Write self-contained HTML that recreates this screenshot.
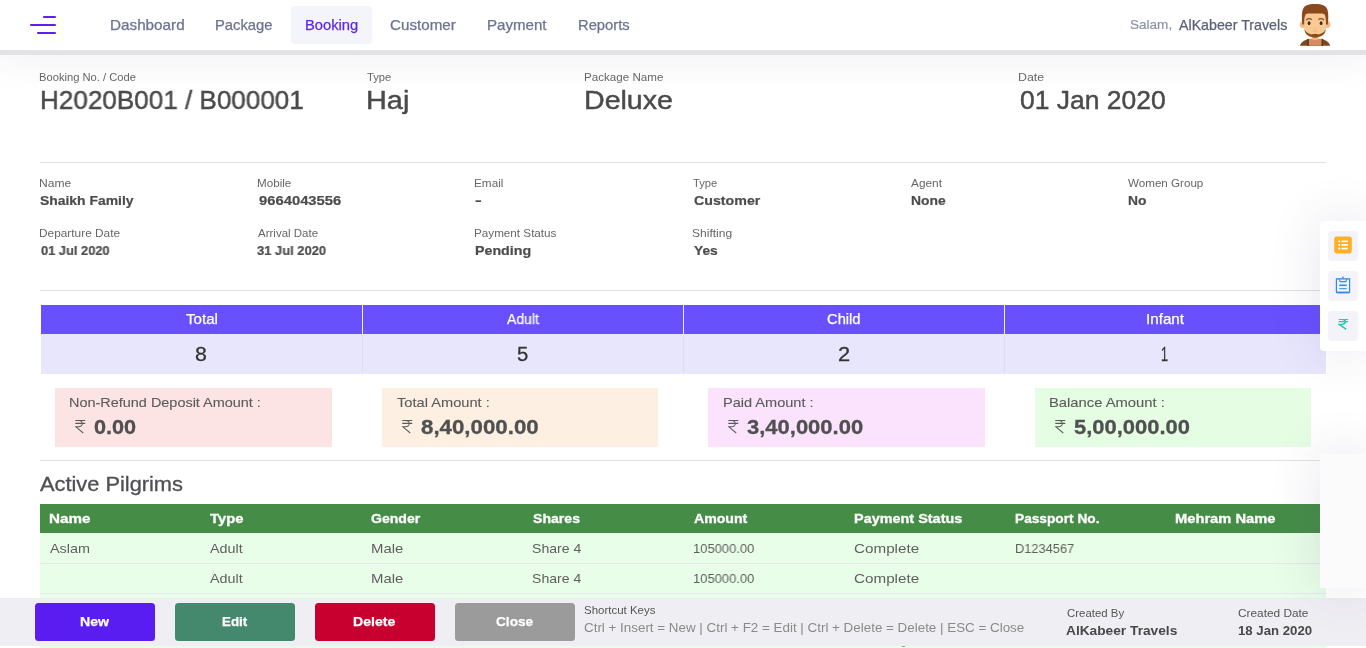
<!DOCTYPE html>
<html lang="en">
<head>
<meta charset="utf-8">
<title>Booking</title>
<style>
*{box-sizing:border-box;margin:0;padding:0}
html,body{width:1366px;height:648px;overflow:hidden;background:#fff}
body{position:relative;font-family:"Liberation Sans",sans-serif}
.a{position:absolute}
.t{position:absolute;white-space:nowrap;line-height:1;transform-origin:0 50%;font-weight:400;will-change:transform}
.hl{position:absolute;height:1px;background:#e1e1e1}
</style>
</head>
<body>
<!-- header -->
<div class="a" style="left:0;top:0;width:1366px;height:55px;background:#fff;box-shadow:0 0 40px 0 rgba(82,63,105,.1)"></div>
<div class="a" style="left:0;top:50px;width:1366px;height:5px;background:#e3e3e5"></div>
<!-- hamburger -->
<div class="a" style="left:43px;top:16px;width:13px;height:2px;background:#5d1ef0;border-radius:1px"></div>
<div class="a" style="left:30px;top:24px;width:26px;height:2px;background:#5d1ef0;border-radius:1px"></div>
<div class="a" style="left:37px;top:32px;width:19px;height:2px;background:#5d1ef0;border-radius:1px"></div>
<!-- active nav -->
<div class="a" style="left:291px;top:6px;width:81px;height:38px;border-radius:4px;background:#f4f5fb"></div>
<!-- avatar -->
<svg class="a" style="left:1299px;top:3px" width="32" height="44" viewBox="0 0 32 44">
<path d="M0.8 42.8 C2 38.6 6.5 36.2 11 35.9 L21.4 35.9 C26 36.2 30 38.6 31.2 42.8 Z" fill="#7b4a1f"/>
<rect x="8.4" y="35.9" width="15.6" height="6.9" fill="#5e3814"/>
<rect x="9.9" y="35.9" width="12.6" height="6.9" fill="#d68c62"/>
<rect x="12.8" y="31" width="6.6" height="6" rx="1.5" fill="#f2b27c"/>
<ellipse cx="3.6" cy="21.6" rx="2.8" ry="3.4" fill="#f5ba86"/>
<ellipse cx="28.6" cy="21.6" rx="2.8" ry="3.4" fill="#f5ba86"/>
<path d="M5 8 L27.2 8 L27.2 24 C27.2 30.5 22.5 34.2 16.1 34.2 C9.7 34.2 5 30.5 5 24 Z" fill="#f9ca95"/>
<path d="M5.6 26.5 C7.5 30.2 11.5 31.8 16.1 31.8 C20.7 31.8 24.7 30.2 26.6 26.5 C26.6 31.5 21.8 34.4 16.1 34.4 C10.4 34.4 5.6 31.5 5.6 26.5 Z" fill="#8a4a1d"/>
<ellipse cx="16.1" cy="32.6" rx="3.4" ry="1.9" fill="#8a4a1d"/>
<path d="M3.3 21.5 C2.7 15 2.6 9.5 3.9 6.2 C5.4 2.4 9 0.9 16.1 0.9 C23.2 0.9 26.8 2.4 28.3 6.2 C29.6 9.5 29.5 15 28.9 21.5 L27 21.5 C27 17 26.9 14 25.6 11.6 C24.9 10.6 23.6 10.4 22 10.4 L10.2 10.4 C8.6 10.4 7.3 10.6 6.6 11.6 C5.3 14 5.2 17 5.2 21.5 Z" fill="#8a4a1d"/>
<path d="M7.6 16.8 C8.6 15.4 11 15.2 12.4 16.2" stroke="#8a4a1d" stroke-width="1.3" fill="none" stroke-linecap="round"/>
<path d="M19.8 16.2 C21.2 15.2 23.6 15.4 24.6 16.8" stroke="#8a4a1d" stroke-width="1.3" fill="none" stroke-linecap="round"/>
<ellipse cx="10.1" cy="20.2" rx="1.4" ry="1.9" fill="#3d2a1e"/>
<ellipse cx="22.1" cy="20.2" rx="1.4" ry="1.9" fill="#3d2a1e"/>
<rect x="14.6" y="24.6" width="3" height="1.2" rx=".6" fill="#f5b985"/>
<rect x="13.2" y="27.6" width="5.8" height="1" rx=".5" fill="#f2b27c"/>
</svg>
<!-- separators -->
<div class="hl" style="left:40px;top:162px;width:1286px"></div>
<div class="hl" style="left:40px;top:290px;width:1286px"></div>
<div class="hl" style="left:40px;top:460px;width:1286px"></div>
<!-- counts table -->
<div class="a" style="left:40.7px;top:305px;width:1285px;height:28.8px;background:#6850ff"></div>
<div class="a" style="left:40.7px;top:333.8px;width:1285px;height:40.6px;background:#e8e6fd"></div>
<div class="a" style="left:362.3px;top:304.8px;width:1px;height:29px;background:rgba(255,255,255,.9)"></div><div class="a" style="left:362.3px;top:333.8px;width:1px;height:40.7px;background:#dedeea"></div>
<div class="a" style="left:683.3px;top:304.8px;width:1px;height:29px;background:rgba(255,255,255,.9)"></div><div class="a" style="left:683.3px;top:333.8px;width:1px;height:40.7px;background:#dedeea"></div>
<div class="a" style="left:1004.3px;top:304.8px;width:1px;height:29px;background:rgba(255,255,255,.9)"></div><div class="a" style="left:1004.3px;top:333.8px;width:1px;height:40.7px;background:#dedeea"></div>
<!-- amount boxes -->
<div class="a" style="left:55px;top:388px;width:276.5px;height:58.5px;background:#fce4e4"></div>
<div class="a" style="left:382px;top:388px;width:275.5px;height:58.5px;background:#fdf0e2"></div>
<div class="a" style="left:708px;top:388px;width:276.5px;height:58.5px;background:#fbe3fd"></div>
<div class="a" style="left:1035px;top:388px;width:275.5px;height:58.5px;background:#e5fde3"></div>
<svg class="a" style="left:74.5px;top:419.6px" width="11.4" height="14" viewBox="0 0 12 14" preserveAspectRatio="none"><path d="M0.3 0.55 H10.8 M0.3 3.35 H10.8 M0.3 0.55 H3.9 C6.3 0.55 7.7 1.8 7.7 3.55 C7.7 5.4 6.1 6.65 3.7 6.65 H0.6 L8.7 13" fill="none" stroke="#5a5a5a" stroke-width="1.05"/></svg>
<svg class="a" style="left:401.5px;top:419.6px" width="11.4" height="14" viewBox="0 0 12 14" preserveAspectRatio="none"><path d="M0.3 0.55 H10.8 M0.3 3.35 H10.8 M0.3 0.55 H3.9 C6.3 0.55 7.7 1.8 7.7 3.55 C7.7 5.4 6.1 6.65 3.7 6.65 H0.6 L8.7 13" fill="none" stroke="#5a5a5a" stroke-width="1.05"/></svg>
<svg class="a" style="left:728px;top:419.6px" width="11.4" height="14" viewBox="0 0 12 14" preserveAspectRatio="none"><path d="M0.3 0.55 H10.8 M0.3 3.35 H10.8 M0.3 0.55 H3.9 C6.3 0.55 7.7 1.8 7.7 3.55 C7.7 5.4 6.1 6.65 3.7 6.65 H0.6 L8.7 13" fill="none" stroke="#5a5a5a" stroke-width="1.05"/></svg>
<svg class="a" style="left:1054.5px;top:419.6px" width="11.4" height="14" viewBox="0 0 12 14" preserveAspectRatio="none"><path d="M0.3 0.55 H10.8 M0.3 3.35 H10.8 M0.3 0.55 H3.9 C6.3 0.55 7.7 1.8 7.7 3.55 C7.7 5.4 6.1 6.65 3.7 6.65 H0.6 L8.7 13" fill="none" stroke="#5a5a5a" stroke-width="1.05"/></svg>

<!-- pilgrims table -->
<div class="a" style="left:40px;top:504px;width:1286px;height:28.9px;background:#458d47"></div>
<div class="a" style="left:40px;top:532.5px;width:1286px;height:116px;background:#e8fee8"></div>
<div class="hl" style="left:40px;top:563px;width:1286px;background:#e6e8ee"></div>
<div class="hl" style="left:40px;top:593px;width:1286px;background:#e6e8ee"></div>
<span class="t" style="left:109.52px;top:18.38px;font-size:14.20px;color:#6c7293;transform:scaleX(1.0753);-webkit-text-stroke:.25px currentColor;">Dashboard</span>
<span class="t" style="left:215.16px;top:18.38px;font-size:14.20px;color:#6c7293;transform:scaleX(1.0416);-webkit-text-stroke:.25px currentColor;">Package</span>
<span class="t" style="left:304.76px;top:18.38px;font-size:14.20px;color:#5d28e8;transform:scaleX(1.0390);-webkit-text-stroke:.25px currentColor;">Booking</span>
<span class="t" style="left:389.88px;top:18.38px;font-size:14.20px;color:#6c7293;transform:scaleX(1.0708);-webkit-text-stroke:.25px currentColor;">Customer</span>
<span class="t" style="left:486.74px;top:18.38px;font-size:14.20px;color:#6c7293;transform:scaleX(1.0631);-webkit-text-stroke:.25px currentColor;">Payment</span>
<span class="t" style="left:578.17px;top:18.38px;font-size:14.20px;color:#6c7293;transform:scaleX(1.0398);-webkit-text-stroke:.25px currentColor;">Reports</span>
<span class="t" style="left:1129.54px;top:19.12px;font-size:12.38px;color:#8d93ab;transform:scaleX(1.0942);-webkit-text-stroke:.2px currentColor;">Salam,</span>
<span class="t" style="left:1178.60px;top:18.38px;font-size:14.20px;color:#5c6079;transform:scaleX(1.0019);-webkit-text-stroke:.25px currentColor;">AlKabeer Travels</span>
<span class="t" style="left:39.11px;top:71.85px;font-size:11.16px;color:#666;transform:scaleX(1.0029);">Booking No. / Code</span>
<span class="t" style="left:40.02px;top:86.57px;font-size:26.38px;color:#4a4a4a;transform:scaleX(0.9883);-webkit-text-stroke:.45px currentColor;">H2020B001 / B000001</span>
<span class="t" style="left:366.80px;top:71.85px;font-size:11.16px;color:#666;transform:scaleX(1.0040);">Type</span>
<span class="t" style="left:366.23px;top:86.57px;font-size:26.38px;color:#4a4a4a;transform:scaleX(1.0958);-webkit-text-stroke:.45px currentColor;">Haj</span>
<span class="t" style="left:583.86px;top:71.85px;font-size:11.16px;color:#666;transform:scaleX(1.0403);">Package Name</span>
<span class="t" style="left:583.85px;top:86.57px;font-size:26.38px;color:#4a4a4a;transform:scaleX(1.0832);-webkit-text-stroke:.45px currentColor;">Deluxe</span>
<span class="t" style="left:1018.00px;top:71.85px;font-size:11.16px;color:#666;transform:scaleX(1.1093);">Date</span>
<span class="t" style="left:1020.00px;top:86.57px;font-size:26.38px;color:#4a4a4a;transform:scaleX(1.0033);-webkit-text-stroke:.45px currentColor;">01 Jan 2020</span>
<span class="t" style="left:39.01px;top:177.55px;font-size:11.16px;color:#666;transform:scaleX(1.0831);">Name</span>
<span class="t" style="left:39.99px;top:193.74px;font-size:13.19px;color:#4c4c4c;transform:scaleX(1.0546);font-weight:700;-webkit-text-stroke:.2px currentColor;">Shaikh Family</span>
<span class="t" style="left:39.04px;top:227.75px;font-size:11.16px;color:#666;transform:scaleX(1.0633);">Departure Date</span>
<span class="t" style="left:40.60px;top:243.54px;font-size:13.19px;color:#4c4c4c;transform:scaleX(0.9745);font-weight:700;-webkit-text-stroke:.2px currentColor;">01 Jul 2020</span>
<span class="t" style="left:257.04px;top:177.55px;font-size:11.16px;color:#666;transform:scaleX(1.0438);">Mobile</span>
<span class="t" style="left:258.60px;top:193.74px;font-size:13.19px;color:#4c4c4c;transform:scaleX(1.1216);font-weight:700;-webkit-text-stroke:.2px currentColor;">9664043556</span>
<span class="t" style="left:258.00px;top:227.75px;font-size:11.16px;color:#666;transform:scaleX(1.0317);">Arrival Date</span>
<span class="t" style="left:257.08px;top:243.54px;font-size:13.19px;color:#4c4c4c;transform:scaleX(0.9815);font-weight:700;-webkit-text-stroke:.2px currentColor;">31 Jul 2020</span>
<span class="t" style="left:474.05px;top:177.55px;font-size:11.16px;color:#666;transform:scaleX(1.0538);">Email</span>
<span class="t" style="left:474.87px;top:193.74px;font-size:13.19px;color:#4c4c4c;transform:scaleX(1.5456);font-weight:700;-webkit-text-stroke:.2px currentColor;">-</span>
<span class="t" style="left:474.05px;top:227.75px;font-size:11.16px;color:#666;transform:scaleX(1.0469);">Payment Status</span>
<span class="t" style="left:474.68px;top:243.54px;font-size:13.19px;color:#4c4c4c;transform:scaleX(1.0798);font-weight:700;-webkit-text-stroke:.2px currentColor;">Pending</span>
<span class="t" style="left:693.00px;top:177.55px;font-size:11.16px;color:#666;transform:scaleX(1.0018);">Type</span>
<span class="t" style="left:693.60px;top:193.74px;font-size:13.19px;color:#4c4c4c;transform:scaleX(1.0786);font-weight:700;-webkit-text-stroke:.2px currentColor;">Customer</span>
<span class="t" style="left:692.20px;top:227.75px;font-size:11.16px;color:#666;transform:scaleX(1.0779);">Shifting</span>
<span class="t" style="left:693.60px;top:243.54px;font-size:13.19px;color:#4c4c4c;transform:scaleX(1.0451);font-weight:700;-webkit-text-stroke:.2px currentColor;">Yes</span>
<span class="t" style="left:911.00px;top:177.55px;font-size:11.16px;color:#666;transform:scaleX(1.0609);">Agent</span>
<span class="t" style="left:910.72px;top:193.74px;font-size:13.19px;color:#4c4c4c;transform:scaleX(1.0517);font-weight:700;-webkit-text-stroke:.2px currentColor;">None</span>
<span class="t" style="left:1128.00px;top:177.55px;font-size:11.16px;color:#666;transform:scaleX(1.0410);">Women Group</span>
<span class="t" style="left:1127.74px;top:193.74px;font-size:13.19px;color:#4c4c4c;transform:scaleX(1.0461);font-weight:700;-webkit-text-stroke:.2px currentColor;">No</span>
<span class="t" style="left:186.00px;top:312.48px;font-size:14.20px;color:#fff;transform:scaleX(1.0675);-webkit-text-stroke:.25px currentColor;">Total</span>
<span class="t" style="left:507.00px;top:312.48px;font-size:14.20px;color:#fff;transform:scaleX(0.9836);-webkit-text-stroke:.25px currentColor;">Adult</span>
<span class="t" style="left:827.33px;top:312.48px;font-size:14.20px;color:#fff;transform:scaleX(1.0377);-webkit-text-stroke:.25px currentColor;">Child</span>
<span class="t" style="left:1145.93px;top:312.48px;font-size:14.20px;color:#fff;transform:scaleX(1.0708);-webkit-text-stroke:.25px currentColor;">Infant</span>
<span class="t" style="left:195.02px;top:344.32px;font-size:20.29px;color:#333;transform:scaleX(1.0514);-webkit-text-stroke:.3px currentColor;">8</span>
<span class="t" style="left:517.05px;top:344.32px;font-size:20.29px;color:#333;transform:scaleX(0.9965);-webkit-text-stroke:.3px currentColor;">5</span>
<span class="t" style="left:838.00px;top:344.32px;font-size:20.29px;color:#333;transform:scaleX(1.0767);-webkit-text-stroke:.3px currentColor;">2</span>
<span class="t" style="left:1160.90px;top:344.32px;font-size:20.29px;color:#333;transform:scaleX(0.6200);-webkit-text-stroke:.3px currentColor;">1</span>
<span class="t" style="left:69.31px;top:395.84px;font-size:13.19px;color:#5c5c5c;transform:scaleX(1.0951);-webkit-text-stroke:.12px currentColor;">Non-Refund Deposit Amount :</span>
<span class="t" style="left:397.40px;top:395.84px;font-size:13.19px;color:#5c5c5c;transform:scaleX(1.1098);-webkit-text-stroke:.12px currentColor;">Total Amount :</span>
<span class="t" style="left:722.71px;top:395.84px;font-size:13.19px;color:#5c5c5c;transform:scaleX(1.1028);-webkit-text-stroke:.12px currentColor;">Paid Amount :</span>
<span class="t" style="left:1049.29px;top:395.84px;font-size:13.19px;color:#5c5c5c;transform:scaleX(1.1201);-webkit-text-stroke:.12px currentColor;">Balance Amount :</span>
<span class="t" style="left:94.20px;top:416.52px;font-size:20.29px;color:#505050;transform:scaleX(1.0669);font-weight:700;-webkit-text-stroke:.3px currentColor;">0.00</span>
<span class="t" style="left:421.37px;top:416.52px;font-size:20.29px;color:#505050;transform:scaleX(1.0986);font-weight:700;-webkit-text-stroke:.3px currentColor;">8,40,000.00</span>
<span class="t" style="left:747.17px;top:416.52px;font-size:20.29px;color:#505050;transform:scaleX(1.0837);font-weight:700;-webkit-text-stroke:.3px currentColor;">3,40,000.00</span>
<span class="t" style="left:1074.19px;top:416.52px;font-size:20.29px;color:#505050;transform:scaleX(1.0825);font-weight:700;-webkit-text-stroke:.3px currentColor;">5,00,000.00</span>
<span class="t" style="left:40.00px;top:474.87px;font-size:19.88px;color:#4f4f54;transform:scaleX(1.0977);-webkit-text-stroke:.3px currentColor;">Active Pilgrims</span>
<span class="t" style="left:49.00px;top:511.84px;font-size:13.19px;color:#fff;transform:scaleX(1.1538);font-weight:700;-webkit-text-stroke:.3px currentColor;">Name</span>
<span class="t" style="left:210.00px;top:511.84px;font-size:13.19px;color:#fff;transform:scaleX(1.1210);font-weight:700;-webkit-text-stroke:.3px currentColor;">Type</span>
<span class="t" style="left:371.00px;top:511.84px;font-size:13.19px;color:#fff;transform:scaleX(1.0654);font-weight:700;-webkit-text-stroke:.3px currentColor;">Gender</span>
<span class="t" style="left:532.58px;top:511.84px;font-size:13.19px;color:#fff;transform:scaleX(1.0693);font-weight:700;-webkit-text-stroke:.3px currentColor;">Shares</span>
<span class="t" style="left:694.00px;top:511.84px;font-size:13.19px;color:#fff;transform:scaleX(1.0701);font-weight:700;-webkit-text-stroke:.3px currentColor;">Amount</span>
<span class="t" style="left:854.07px;top:511.84px;font-size:13.19px;color:#fff;transform:scaleX(1.0944);font-weight:700;-webkit-text-stroke:.3px currentColor;">Payment Status</span>
<span class="t" style="left:1015.14px;top:511.84px;font-size:13.19px;color:#fff;transform:scaleX(1.0383);font-weight:700;-webkit-text-stroke:.3px currentColor;">Passport No.</span>
<span class="t" style="left:1175.04px;top:511.84px;font-size:13.19px;color:#fff;transform:scaleX(1.1141);font-weight:700;-webkit-text-stroke:.3px currentColor;">Mehram Name</span>
<span class="t" style="left:50.00px;top:541.84px;font-size:13.19px;color:#5f5f5f;transform:scaleX(1.0916);">Aslam</span>
<span class="t" style="left:210.00px;top:541.84px;font-size:13.19px;color:#5f5f5f;transform:scaleX(1.0859);">Adult</span>
<span class="t" style="left:370.88px;top:541.84px;font-size:13.19px;color:#5f5f5f;transform:scaleX(1.1302);">Male</span>
<span class="t" style="left:532.33px;top:541.84px;font-size:13.19px;color:#5f5f5f;transform:scaleX(1.0668);">Share 4</span>
<span class="t" style="left:693.02px;top:541.84px;font-size:13.19px;color:#5f5f5f;transform:scaleX(0.9838);">105000.00</span>
<span class="t" style="left:854.29px;top:541.84px;font-size:13.19px;color:#5f5f5f;transform:scaleX(1.1547);">Complete</span>
<span class="t" style="left:1015.03px;top:541.84px;font-size:13.19px;color:#5f5f5f;transform:scaleX(0.9726);">D1234567</span>
<span class="t" style="left:210.00px;top:571.84px;font-size:13.19px;color:#5f5f5f;transform:scaleX(1.0859);">Adult</span>
<span class="t" style="left:370.88px;top:571.84px;font-size:13.19px;color:#5f5f5f;transform:scaleX(1.1302);">Male</span>
<span class="t" style="left:532.33px;top:571.84px;font-size:13.19px;color:#5f5f5f;transform:scaleX(1.0668);">Share 4</span>
<span class="t" style="left:693.02px;top:571.84px;font-size:13.19px;color:#5f5f5f;transform:scaleX(0.9838);">105000.00</span>
<span class="t" style="left:854.29px;top:571.84px;font-size:13.19px;color:#5f5f5f;transform:scaleX(1.1547);">Complete</span>
<!-- footer bar -->
<div class="a" style="left:901.5px;top:646px;width:3px;height:1px;background:#9a9a9a"></div>
<div class="a" style="left:0;top:598px;width:1366px;height:48px;background:#efeef3"></div>
<div class="a" style="left:35px;top:602.8px;width:120px;height:38.4px;border-radius:3.5px;background:#591df1"></div>
<div class="a" style="left:175px;top:602.8px;width:120px;height:38.4px;border-radius:3.5px;background:#44886e"></div>
<div class="a" style="left:315px;top:602.8px;width:120px;height:38.4px;border-radius:3.5px;background:#c8002f"></div>
<div class="a" style="left:455px;top:602.8px;width:120px;height:38.4px;border-radius:3.5px;background:#9b9b9b"></div>
<span class="t" style="left:80.09px;top:615.04px;font-size:13.19px;color:#fff;transform:scaleX(1.0707);font-weight:700;-webkit-text-stroke:.25px currentColor;">New</span>
<span class="t" style="left:222.18px;top:615.04px;font-size:13.19px;color:#fff;transform:scaleX(1.0096);font-weight:700;-webkit-text-stroke:.25px currentColor;">Edit</span>
<span class="t" style="left:353.09px;top:615.04px;font-size:13.19px;color:#fff;transform:scaleX(1.0690);font-weight:700;-webkit-text-stroke:.25px currentColor;">Delete</span>
<span class="t" style="left:496.00px;top:615.04px;font-size:13.19px;color:#fff;transform:scaleX(1.0348);font-weight:700;-webkit-text-stroke:.25px currentColor;">Close</span>
<span class="t" style="left:584.23px;top:605.05px;font-size:11.16px;color:#555;transform:scaleX(1.0279);">Shortcut Keys</span>
<span class="t" style="left:584.42px;top:620.84px;font-size:13.19px;color:#8a8a8a;transform:scaleX(1.0155);">Ctrl + Insert = New | Ctrl + F2 = Edit | Ctrl + Delete = Delete | ESC = Close</span>
<span class="t" style="left:1067.20px;top:608.05px;font-size:11.16px;color:#555;transform:scaleX(1.0234);">Created By</span>
<span class="t" style="left:1066.00px;top:623.84px;font-size:13.19px;color:#484848;transform:scaleX(1.0398);font-weight:700;">AlKabeer Travels</span>
<span class="t" style="left:1238.00px;top:608.05px;font-size:11.16px;color:#555;transform:scaleX(1.0609);">Created Date</span>
<span class="t" style="left:1237.66px;top:623.84px;font-size:13.19px;color:#484848;transform:scaleX(0.9945);font-weight:700;">18 Jan 2020</span>
<!-- sticky toolbar -->
<div class="a" style="left:1320px;top:221px;width:46px;height:130px;background:#fff;border-radius:4px 0 0 4px;box-shadow:0 0 50px 0 rgba(82,63,105,.15)"></div>
<div class="a" style="left:1328px;top:231px;width:30px;height:30px;border-radius:4px;background:#f3f3f9"></div>
<div class="a" style="left:1328px;top:271px;width:30px;height:30px;border-radius:4px;background:#f3f3f9"></div>
<div class="a" style="left:1328px;top:311px;width:30px;height:30px;border-radius:4px;background:#f3f3f9"></div>
<svg class="a" style="left:1334px;top:235.5px" width="18" height="18" viewBox="0 0 18 18"><rect x="0.2" y="0.4" width="17.6" height="17.1" rx="2.4" fill="#fbb126"/><g fill="#fff"><rect x="4.4" y="4.5" width="1.8" height="1.7"/><rect x="7.5" y="4.5" width="6.3" height="1.7"/><rect x="4.4" y="8.1" width="1.8" height="1.7"/><rect x="7.5" y="8.1" width="6.3" height="1.7"/><rect x="4.4" y="11.7" width="1.8" height="1.7"/><rect x="7.5" y="11.7" width="6.3" height="1.7"/></g></svg>
<svg class="a" style="left:1335px;top:275.5px" width="16" height="18" viewBox="0 0 16 18"><g fill="none" stroke="#2b86f7"><path d="M1.4 2.9 H14.6 V15.4 Q14.6 16.6 13.4 16.6 H2.6 Q1.4 16.6 1.4 15.4 Z" stroke-width="1.2"/><path d="M1.4 16.4 H14.6" stroke-width="1.6"/><path d="M4 2.9 L5.2 5.6 H10.8 L12 2.9" stroke-width="1.1"/><path d="M8 0.6 V2.6" stroke-width="1.4"/><path d="M4.3 9.3 H11.7" stroke-width="1.5"/><path d="M4.3 12.7 H11.7" stroke-width="1"/></g></svg>
<svg class="a" style="left:1337.7px;top:319.4px" width="12" height="13" viewBox="0 0 12 14"><path d="M0.3 0.55 H10.8 M0.3 3.35 H10.8 M0.3 0.55 H3.9 C6.3 0.55 7.7 1.8 7.7 3.55 C7.7 5.4 6.1 6.65 3.7 6.65 H0.6 L8.7 13" fill="none" stroke="#2dc7a9" stroke-width="1.7" transform="scale(0.97,0.86)"/></svg>

<!-- second panel -->
<div class="a" style="left:1320px;top:453.5px;width:46px;height:134px;background:#fbfbfc;box-shadow:0 0 50px 0 rgba(82,63,105,.15)"></div>
</body>
</html>
